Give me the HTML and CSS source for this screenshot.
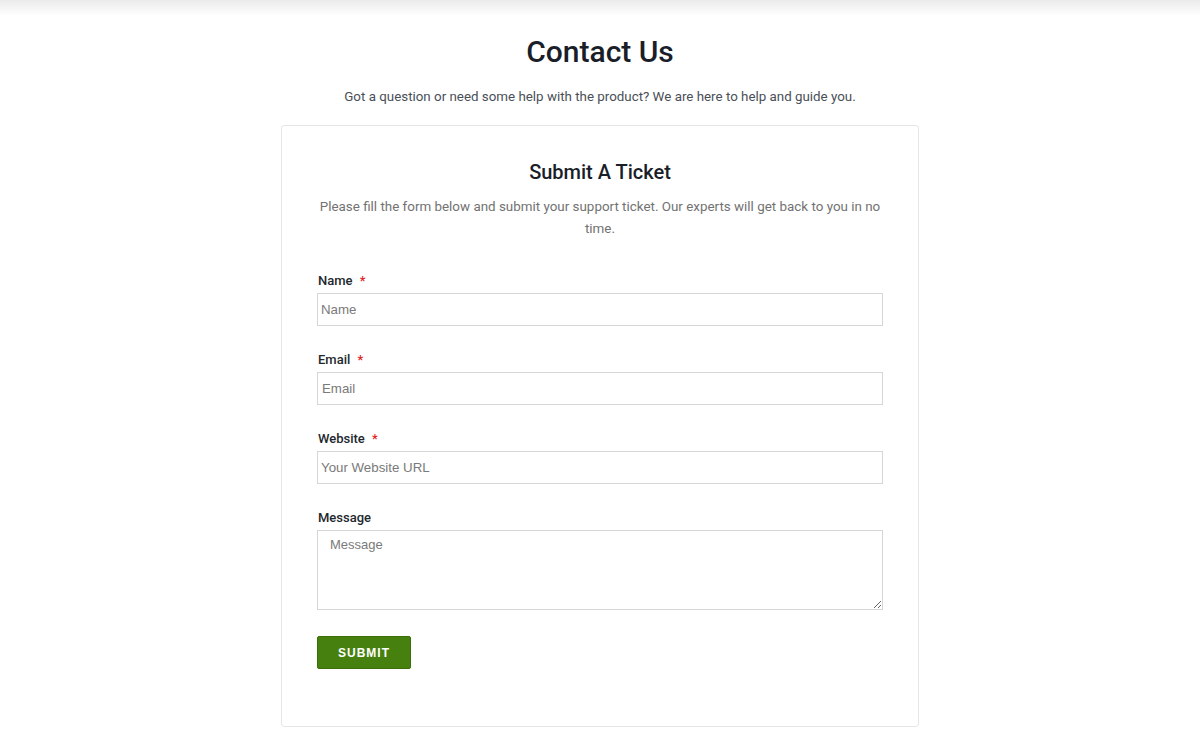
FILE: index.html
```html
<!DOCTYPE html>
<html lang="en">
<head>
<meta charset="utf-8">
<title>Contact Us</title>
<link rel="stylesheet" href="styles.css">
</head>
<body>
<div class="topshade"></div>
<main class="page">
  <h1 class="title">Contact Us</h1>
  <p class="subtitle">Got a question or need some help with the product? We are here to help and guide you.</p>
  <section class="card">
    <h2 class="card-title">Submit A Ticket</h2>
    <p class="card-text">Please fill the form below and submit your support ticket. Our experts will get back to you in no time.</p>
    <form class="form">
      <div class="field">
        <label class="label">Name <span class="req">*</span></label>
        <input class="input" type="text" placeholder="Name">
      </div>
      <div class="field">
        <label class="label">Email <span class="req">*</span></label>
        <input class="input input-email" type="text" placeholder="Email">
      </div>
      <div class="field">
        <label class="label">Website <span class="req">*</span></label>
        <input class="input" type="text" placeholder="Your Website URL">
      </div>
      <div class="field">
        <label class="label">Message</label>
        <textarea class="textarea" placeholder="Message"></textarea>
      </div>
      <button class="submit" type="button">SUBMIT</button>
    </form>
  </section>
</main>
</body>
</html>
```
FILE: styles.css
```css
html, body {
  margin: 0;
  padding: 0;
  background: #ffffff;
  font-family: Roboto, "Liberation Sans", Arial, sans-serif;
}

.topshade {
  height: 16px;
  background: linear-gradient(#ebebeb, rgba(255,255,255,0));
}

.page {
  display: flex;
  flex-direction: column;
  align-items: center;
}

.title {
  margin: 18px 0 0;
  font-size: 30px;
  line-height: 36px;
  font-weight: 500;
  color: #1a1e29;
}

.subtitle {
  margin: 16px 0 0;
  font-size: 13.35px;
  line-height: 22px;
  color: #4a5057;
}

.card {
  box-sizing: border-box;
  width: 638px;
  margin-top: 17px;
  border: 1px solid #e6e6e6;
  border-radius: 3px;
  padding: 32px 35px 57px;
}

.card-title {
  margin: 0;
  text-align: center;
  font-size: 20px;
  line-height: 28px;
  font-weight: 500;
  color: #1a1e29;
}

.card-text {
  margin: 10px 0 0;
  text-align: center;
  font-size: 13.4px;
  line-height: 22px;
  color: #727272;
}

.form {
  margin-top: 32px;
  display: flex;
  flex-direction: column;
  align-items: flex-start;
}

.field {
  width: 100%;
  display: flex;
  flex-direction: column;
  margin-bottom: 25px;
}

.label {
  font-size: 13px;
  line-height: 18px;
  font-weight: 500;
  color: #23282d;
  margin-bottom: 3px;
  padding-left: 1px;
}

.req {
  color: #e02424;
  margin-left: 4px;
}

.input {
  box-sizing: border-box;
  height: 33px;
  width: 100%;
  border: 1px solid #d6d6d6;
  border-radius: 0;
  padding: 0 3px;
  font-family: "Liberation Sans", Arial, sans-serif;
  font-size: 13.3px;
  color: #333;
  outline: none;
}

.input-email {
  padding-left: 4px;
}

.input::placeholder,
.textarea::placeholder {
  color: #7a7a7a;
}

.textarea {
  box-sizing: border-box;
  height: 80px;
  width: 100%;
  border: 1px solid #d6d6d6;
  border-radius: 0;
  padding: 6px 12px;
  font-family: "Liberation Sans", Arial, sans-serif;
  font-size: 13px;
  line-height: 16px;
  color: #333;
  outline: none;
  resize: vertical;
}

.submit {
  margin-top: 1px;
  height: 33px;
  padding: 0 20px;
  background: #46810f;
  border: 1px solid #3b6e0b;
  border-radius: 2px;
  color: #ffffff;
  font-family: "Liberation Sans", Arial, sans-serif;
  font-size: 12px;
  font-weight: 700;
  letter-spacing: 1px;
  cursor: pointer;
}
```
